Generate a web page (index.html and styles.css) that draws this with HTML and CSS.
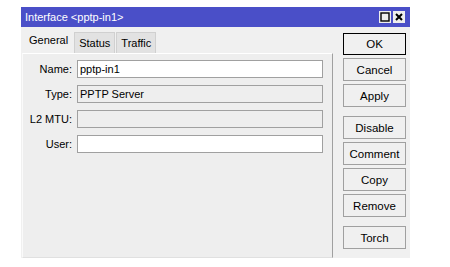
FILE: index.html
```html
<!DOCTYPE html>
<html lang="en">
<head>
  <meta charset="utf-8" />
  <title>Interface &lt;pptp-in1&gt;</title>
  <link rel="stylesheet" href="styles.css">
</head>
<body>

  <div class="window">
    <!-- title bar -->
    <div class="titlebar">
      <span class="title">Interface &lt;pptp-in1&gt;</span>
      <div class="win-buttons">
        <span class="win-btn">
          <svg width="10" height="10" viewBox="0 0 10 10"><rect x="1" y="1" width="8" height="8" fill="none" stroke="#000" stroke-width="1.4"/></svg>
        </span>
        <span class="win-btn">
          <svg width="10" height="10" viewBox="0 0 10 10"><path d="M2 2 L8 8 M8 2 L2 8" stroke="#000" stroke-width="2"/></svg>
        </span>
      </div>
    </div>

    <div class="content">
      <!-- left side: tabs + form -->
      <div class="main">
        <div class="tabs">
          <div class="tab active">General</div>
          <div class="tab">Status</div>
          <div class="tab">Traffic</div>
        </div>
        <div class="panel">
          <div class="row">
            <label>Name:</label>
            <div class="field">pptp-in1</div>
          </div>
          <div class="row">
            <label>Type:</label>
            <div class="field readonly">PPTP Server</div>
          </div>
          <div class="row">
            <label>L2 MTU:</label>
            <div class="field readonly"></div>
          </div>
          <div class="row">
            <label>User:</label>
            <div class="field"></div>
          </div>
        </div>
      </div>

      <!-- right side: buttons -->
      <div class="side">
        <button class="btn default">OK</button>
        <button class="btn">Cancel</button>
        <button class="btn">Apply</button>
        <button class="btn spaced">Disable</button>
        <button class="btn">Comment</button>
        <button class="btn">Copy</button>
        <button class="btn">Remove</button>
        <button class="btn spaced">Torch</button>
      </div>
    </div>
  </div>

</body>
</html>
```

FILE: styles.css
```css
body {
  margin: 0;
  background-color: #fff;
  font-family: "Liberation Sans", Arial, sans-serif;
  font-size: 11px;
  color: #000;
}

.window {
  margin: 7px 0 0 21px;
  width: 389px;
  height: 251px;
  background-color: #f0f0f0;
  display: flex;
  flex-direction: column;
}

.titlebar {
  height: 20px;
  background-color: #4a4fc8;
  display: flex;
  align-items: center;
  justify-content: space-between;
  padding: 0 5px 0 4px;
}

.title {
  color: #fff;
}

.win-buttons {
  display: flex;
  gap: 2px;
}

.win-btn {
  width: 12px;
  height: 12px;
  background-color: #eee;
  display: flex;
  align-items: center;
  justify-content: center;
}

.content {
  flex: 1;
  display: flex;
}

.main {
  width: 311px;
  padding-left: 1px;
  display: flex;
  flex-direction: column;
}

.tabs {
  display: flex;
  align-items: flex-end;
  height: 26px;
  padding-left: 1px;
}

.tab {
  height: 20px;
  line-height: 20px;
  padding: 0 4px;
  background-color: #e2e2e2;
  border: 1px solid #d0d0d0;
  border-bottom: none;
  margin-right: 1px;
}

.tab.active {
  height: 25px;
  line-height: 25px;
  background-color: #f0f0f0;
  border-color: #f0f0f0;
  padding: 0 4px 0 5px;
}

.panel {
  flex: 1;
  background-color: #eeeeee;
  border-top: 1px solid #fff;
  border-right: 1px solid #a0a0a0;
  border-left: 1px solid #fafafa;
  border-bottom: 1px solid #e0e0e0;
  padding-top: 6px;
  display: flex;
  flex-direction: column;
  gap: 7px;
}

.row {
  display: flex;
  align-items: center;
  gap: 5px;
}

.row label {
  width: 49px;
  text-align: right;
}

.field {
  width: 240px;
  height: 16px;
  line-height: 16px;
  padding: 0 2px;
  background-color: #fff;
  border: 1px solid #a0a0a0;
}

.field.readonly {
  background-color: #eeeeee;
}

.side {
  flex: 1;
  display: flex;
  flex-direction: column;
  padding: 6px 0 0 10px;
  gap: 3px;
}

.btn {
  width: 63px;
  height: 23px;
  font-family: inherit;
  font-size: 11.5px;
  color: #000;
  background-color: #f0f0f0;
  border: 1px solid #a0a0a0;
  padding: 0;
}

.btn.default {
  border-color: #000;
  height: 22px;
}

.btn.spaced {
  margin-top: 6px;
}
```
